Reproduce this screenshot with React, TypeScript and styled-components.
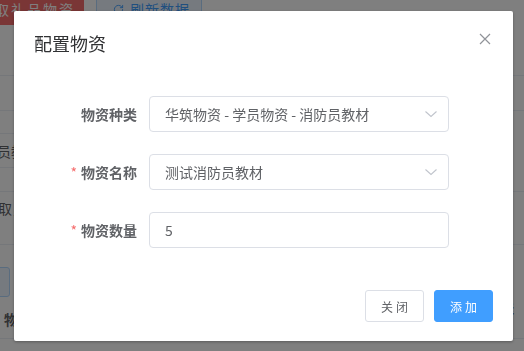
import React from 'react';
import styled, { createGlobalStyle } from 'styled-components';
import { RotateCw } from 'lucide-react';

const GlobalStyle = createGlobalStyle`
  html, body {
    margin: 0;
    padding: 0;
    background: #fff;
  }
  body {
    font-family: 'Noto Sans CJK SC', 'Noto Sans', sans-serif;
    overflow: hidden;
  }
`;

// ---- page behind the dialog ----

const Page = styled.div`
  margin-top: -7px;
  height: 358px;
  overflow: hidden;
  background: #fff;
  color: #606266;
  font-size: 14px;
`;

const Toolbar = styled.div`
  display: flex;
  gap: 12px;
  margin-left: -40px;
  height: 32px;
`;

const PageButton = styled.div<{ $danger?: boolean }>`
  box-sizing: border-box;
  height: 32px;
  display: flex;
  align-items: center;
  gap: 6px;
  border-radius: 3px;
  font-size: 14px;
  border: 1px solid ${(p) => (p.$danger ? '#F56C6C' : '#b3d8ff')};
  background: ${(p) => (p.$danger ? '#F56C6C' : '#ecf5ff')};
  color: ${(p) => (p.$danger ? '#fff' : '#409EFF')};
  letter-spacing: ${(p) => (p.$danger ? '2px' : '1px')};
  justify-content: ${(p) => (p.$danger ? 'flex-end' : 'flex-start')};
  padding: ${(p) => (p.$danger ? '0 8px 0 0' : '0 0 0 16px')};
  width: ${(p) => (p.$danger ? '124px' : '106px')};
`;

const Table = styled.div`
  margin-top: 15px;
`;

const Row = styled.div<{ $h: number }>`
  box-sizing: border-box;
  height: ${(p) => p.$h}px;
  border-bottom: 1px solid #ebeef5;
  display: flex;
  justify-content: space-between;
`;

const Cell = styled.div`
  width: 40px;
  display: flex;
  flex-direction: column;
`;

const SubRow = styled.div<{ $h: number }>`
  box-sizing: border-box;
  height: ${(p) => p.$h}px;
  border-bottom: 1px solid #ebeef5;
  display: flex;
  align-items: center;
  white-space: nowrap;
  &:last-child {
    border-bottom: 0;
  }
`;

const CellText = styled.span<{ $shift?: number; $top?: number; $bold?: boolean }>`
  white-space: nowrap;
  margin-left: ${(p) => p.$shift || 0}px;
  margin-top: ${(p) => p.$top || 0}px;
  font-weight: ${(p) => (p.$bold ? 700 : 400)};
`;

const SmallPageButton = styled.div`
  width: 40px;
  height: 28px;
  margin: 22px 0 0 -32px;
  border: 1px solid #b3d8ff;
  background: #ecf5ff;
  border-radius: 3px;
`;

// ---- dialog ----

const Overlay = styled.div`
  position: fixed;
  inset: 0;
  background: rgba(0, 0, 0, 0.5);
  display: flex;
  align-items: flex-start;
  padding: 11px 0 0 14px;
`;

const Dialog = styled.div`
  position: relative;
  width: 499px;
  background: #fff;
  border-radius: 2px;
  box-shadow: 0 1px 3px rgba(0, 0, 0, 0.3);
`;

const Header = styled.div`
  padding: 20px 20px 10px;
`;

const Title = styled.span`
  font-size: 18px;
  line-height: 24px;
  color: #303133;
`;

const CloseButton = styled.button`
  position: absolute;
  top: 20px;
  right: 20px;
  width: 16px;
  height: 16px;
  padding: 0;
  border: 0;
  background: transparent;
  display: flex;
  cursor: pointer;
`;

const Body = styled.div`
  padding: 30px 20px 32px;
`;

const FormItem = styled.div`
  display: flex;
  margin-bottom: 22px;
  &:last-child {
    margin-bottom: 0;
  }
`;

const Label = styled.label`
  box-sizing: border-box;
  width: 115px;
  padding-right: 12px;
  text-align: right;
  line-height: 36px;
  font-size: 14px;
  font-weight: 700;
  color: #606266;
`;

const Required = styled.span`
  color: #F56C6C;
  margin-right: 4px;
  font-weight: 400;
`;

const InputBox = styled.div`
  box-sizing: border-box;
  position: relative;
  width: 300px;
  height: 36px;
  border: 1px solid #dcdfe6;
  border-radius: 4px;
  padding: 0 15px;
  display: flex;
  align-items: center;
  font-size: 14px;
  color: #606266;
`;

const Suffix = styled.span`
  position: absolute;
  right: 5px;
  top: 0;
  width: 25px;
  height: 100%;
  display: flex;
  align-items: center;
  justify-content: center;
`;

const Footer = styled.div`
  padding: 10px 20px 19px;
  display: flex;
  justify-content: flex-end;
  gap: 10px;
`;

const Button = styled.button<{ $primary?: boolean }>`
  box-sizing: border-box;
  height: 32px;
  padding: 0 12px 0 15px;
  border-radius: 3px;
  font-family: inherit;
  font-size: 12px;
  letter-spacing: 3px;
  border: 1px solid ${(p) => (p.$primary ? '#409EFF' : '#dcdfe6')};
  background: ${(p) => (p.$primary ? '#409EFF' : '#fff')};
  color: ${(p) => (p.$primary ? '#fff' : '#606266')};
  cursor: pointer;
`;

function Chevron() {
  return (
    <svg width='14' height='14' viewBox='0 0 14 14' fill='none'>
      <path d='M1.5 4.5 L7 9.5 L12.5 4.5' stroke='#C0C4CC' strokeWidth='1.1' />
    </svg>
  );
}

function CloseIcon() {
  return (
    <svg width='16' height='16' viewBox='0 0 16 16' fill='none'>
      <path d='M3 3 L13 13 M13 3 L3 13' stroke='#909399' strokeWidth='1.2' />
    </svg>
  );
}

export default function App(): React.ReactElement {
  return (
    <>
      <GlobalStyle />
      <Page>
        <Toolbar>
          <PageButton $danger>领取礼品物资</PageButton>
          <PageButton>
            <RotateCw size={11} strokeWidth={2} />
            <span>刷新数据</span>
          </PageButton>
        </Toolbar>
        <Table>
          <Row $h={36} />
          <Row $h={35} />
          <Row $h={81}>
            <Cell>
              <SubRow $h={23} />
              <SubRow $h={35}>
                <CellText $shift={-3}>员教材</CellText>
              </SubRow>
              <SubRow $h={23} />
            </Cell>
          </Row>
          <Row $h={53}>
            <Cell>
              <CellText $shift={-2} $top={6}>取，</CellText>
            </Cell>
          </Row>
          <Row $h={94}>
            <Cell>
              <SmallPageButton />
              <CellText $shift={4} $top={12} $bold>物资</CellText>
            </Cell>
            <Cell>
              <CellText $shift={2} $top={52} $bold>配送</CellText>
            </Cell>
          </Row>
        </Table>
      </Page>

      <Overlay>
        <Dialog>
          <Header>
            <Title>配置物资</Title>
            <CloseButton aria-label='关闭'>
              <CloseIcon />
            </CloseButton>
          </Header>
          <Body>
            <FormItem>
              <Label>物资种类</Label>
              <InputBox>
                华筑物资 - 学员物资 - 消防员教材
                <Suffix>
                  <Chevron />
                </Suffix>
              </InputBox>
            </FormItem>
            <FormItem>
              <Label>
                <Required>*</Required>物资名称
              </Label>
              <InputBox>
                测试消防员教材
                <Suffix>
                  <Chevron />
                </Suffix>
              </InputBox>
            </FormItem>
            <FormItem>
              <Label>
                <Required>*</Required>物资数量
              </Label>
              <InputBox>5</InputBox>
            </FormItem>
          </Body>
          <Footer>
            <Button>关闭</Button>
            <Button $primary>添加</Button>
          </Footer>
        </Dialog>
      </Overlay>
    </>
  );
}
